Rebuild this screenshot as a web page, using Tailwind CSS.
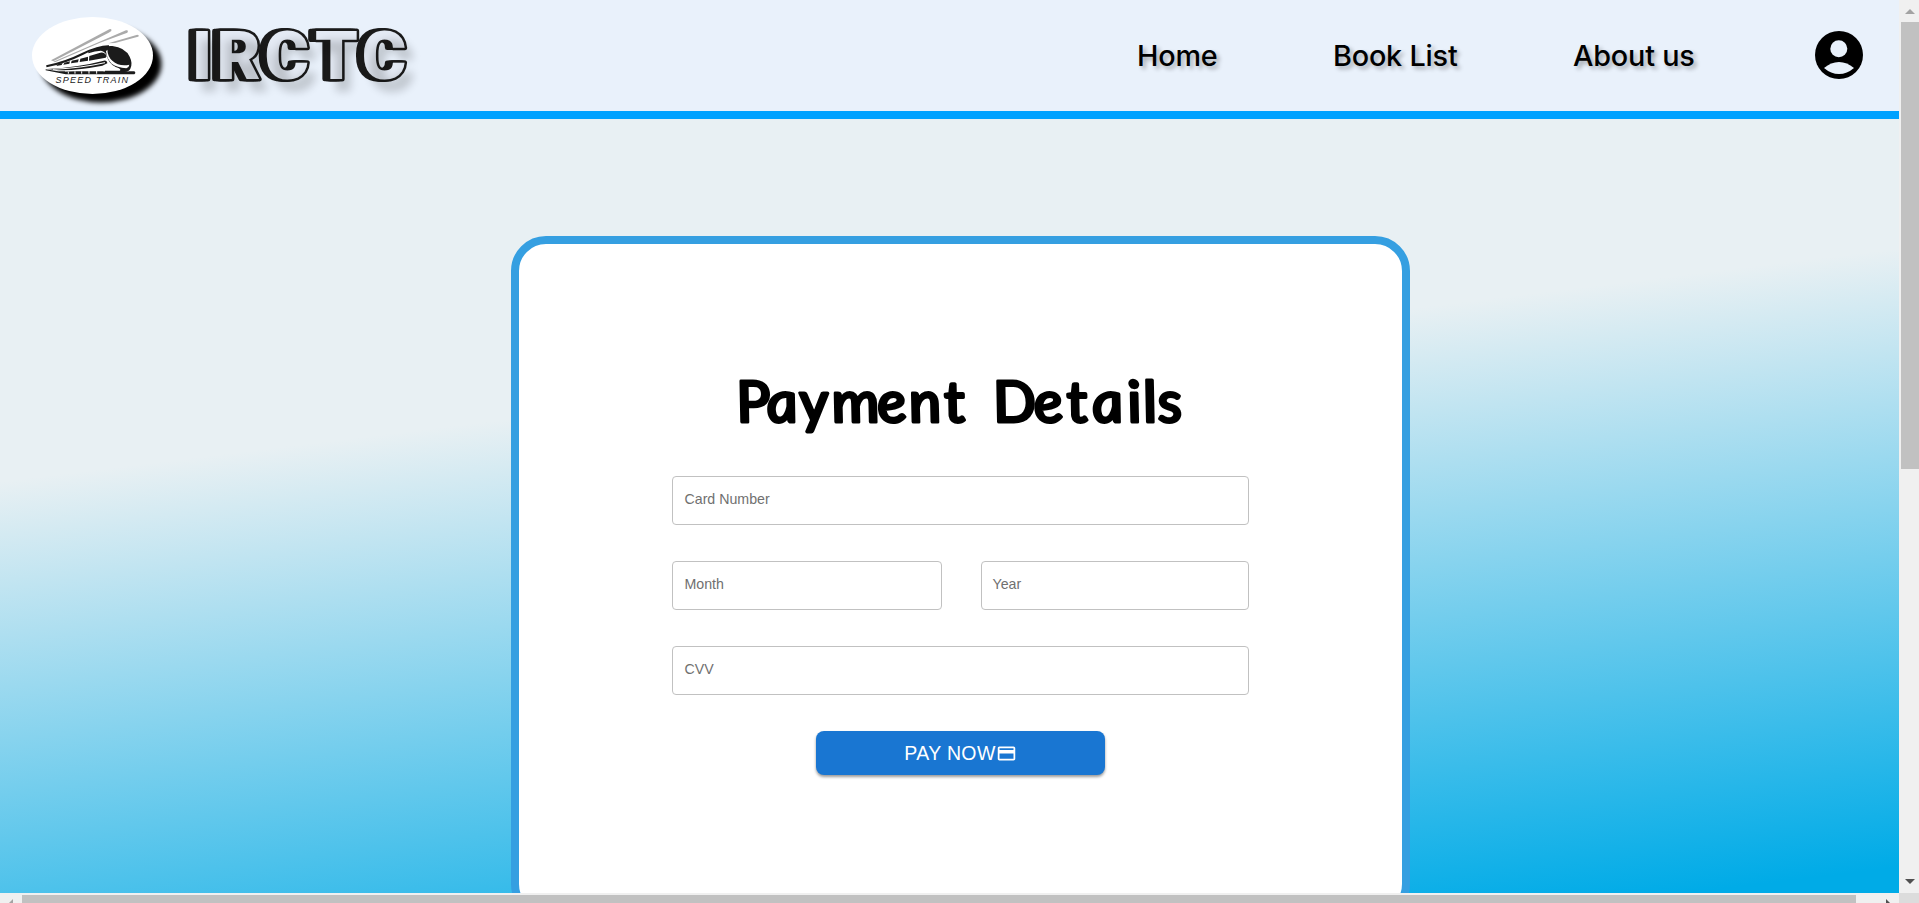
<!DOCTYPE html>
<html lang="en">
<head>
<meta charset="utf-8">
<title>Payment Details</title>
<script src="https://cdn.jsdelivr.net/npm/@tailwindcss/browser@4"></script>
</head>
<body class="h-[903px] w-[1919px] overflow-hidden bg-[#f0f0f0]">
<div class="grid h-[903px] grid-cols-[1899px_20px] grid-rows-[893px_10px] overflow-hidden">
  <div class="flex flex-col overflow-hidden bg-[linear-gradient(173deg,#e8f0f3_478px,#00abe7_1092px)]">
    <header class="flex h-[119px] shrink-0 border-b-8 border-[#00a2ff] bg-[#e9f1fb]">
      <svg class="h-[111px] w-[440px] shrink-0" viewBox="0 0 440 111">
        <defs>
          <filter id="b1" x="-20%" y="-20%" width="150%" height="150%"><feGaussianBlur stdDeviation="2.4"/></filter>
          <filter id="b2" x="-20%" y="-20%" width="150%" height="150%"><feGaussianBlur stdDeviation="4"/></filter>
        </defs>
        <ellipse cx="101" cy="64" rx="60.500" ry="38.500" filter="url(#b1)"/>
        <ellipse cx="92.500" cy="55.500" rx="60.500" ry="38.500" fill="#fff"/>
        <g transform="scale(.33333) translate(75 30)">
          <g fill="#aaa">
            <path d="M78 151L253 58q8-3 6 5L251 68 85 154z"/>
            <path d="M85 155L303 61q9-1 4 7L225 98 90 157z"/>
            <path d="M250 100L337 74q8 2 2 6L270 99z"/>
          </g>
          <path fill="#1b1b1b" d="M62 178L100 184H328q6 4 0 9H122L62 181z"/>
          <path fill="#fff" d="M240 108L262 160 312 184H235z"/>
          <path fill="none" stroke="#1b1b1b" stroke-width="6" d="M64 169Q120 158 172 132Q222 108 252 109"/>
          <path fill="#1b1b1b" d="M190 126Q230 106 262 108Q300 112 314 140Q324 160 316 176Q312 185 300 186H240V182H284Q292 178 272 171Q250 160 246 138Q242 126 228 122Q210 122 190 130z"/>
          <path fill="#fff" d="M247 119Q248 140 262 152Q282 170 313 164Q312 173 304 175Q276 172 260 161Q246 148 243 124z"/>
          <path fill="#1b1b1b" d="M193 138L226 128Q240 126 245 139L242 143 192 152zM166 146L189 140V152L164 156zM140 152L161 148 159 157 138 160zM118 158L135 154 133 161 115 164zM98 163L113 159 110 165 94 168z"/>
          <path fill="#1b1b1b" d="M66 177Q160 172 236 152Q246 150 247 160L232 167Q160 181 100 181z"/>
          <path fill="none" stroke="#fff" stroke-width="3" d="M84 178Q170 174 240 158"/>
          <path stroke="#fff" stroke-width="3" d="M130 185v6M150 184v7M170 184v7M192 183v8M215 183v8M120 183L225 178"/>
        </g>
        <text x="55.500" y="82.700" font-family="Liberation Sans" font-style="italic" font-size="9" fill="#222" textLength="72.500" lengthAdjust="spacing">SPEED TRAIN</text>
        <g font-family="Roboto" font-weight="900" font-size="66" stroke-linejoin="round" transform="translate(-8 0) scale(1.03 1)">
          <defs><text id="brand" x="194 218 264.500 313.500 359" y="79" paint-order="stroke">IRCTC</text></defs>
          <g fill="#1b1b1b" stroke="#1b1b1b" stroke-width="4.500">
            <use href="#brand" x="-5.500"/><use href="#brand" x="-3.500"/><use href="#brand" x="-2"/>
          </g>
          <use href="#brand" fill="#e4eaf4" stroke="#1b1b1b" stroke-width="5"/>
          <use href="#brand" x="7" y="11" fill="#000" stroke="#000" stroke-width="3" opacity=".17" filter="url(#b2)"/>
        </g>
      </svg>
      <nav class="ml-[697px] flex h-[111px] items-center pt-[2px] font-['Inter',sans-serif] text-[28.800px] leading-none font-medium tracking-[-0.200px] text-black [text-shadow:3px_3px_4px_rgba(0,0,0,0.3)]">
        <a class="w-[196px]">Home</a><a class="w-[240px]">Book List</a><a class="w-[242px]">About us</a>
      </nav>
      <svg class="mt-[31px] h-12 w-12 shrink-0" viewBox="0 0 48 48"><circle cx="24" cy="24" r="24"/><circle cx="23.800" cy="17.700" r="8.500" fill="#e9f1fb"/><path fill="#e9f1fb" d="M9 37Q16 31 24 31T39 37Q32 43 24 43T9 37z"/></svg>
    </header>
    <main class="mt-[117px] ml-[511px] flex h-[683px] w-[899px] shrink-0 flex-col items-center rounded-[35px] border-8 border-[#359fe1] bg-white pt-[112px]">
      <h1 class="h-[120px] w-[480px]">
        <svg class="h-[120px] w-[480px] overflow-visible" viewBox="0 0 480 120">
          <text transform="translate(12 66) scale(1.06 1) skewX(8)" y="0" x="5.700 34 65 95.500 138.500 168.500 202 215 248 286 317.500 341 374.500 389.500 403" font-family="'Comic Sans MS', Lato" font-style="italic" font-weight="400" font-size="57" stroke="#000" stroke-width="3.200" stroke-linejoin="round">Payment Details</text>
        </svg>
      </h1>
      <form class="flex w-[577px] flex-col items-center gap-9 font-['Liberation_Sans',sans-serif] text-[14.200px] text-[#707070]">
        <div class="flex h-[49px] w-full rounded border border-[#c1c1c1] px-[11.500px] pt-[14px] leading-[16px]">Card Number</div>
        <div class="flex w-full gap-[39px]">
          <div class="h-[49px] flex-1 rounded border border-[#c1c1c1] px-[11.500px] pt-[14px] leading-[16px]">Month</div>
          <div class="h-[49px] flex-1 rounded border border-[#c1c1c1] px-[11px] pt-[14px] leading-[16px]">Year</div>
        </div>
        <div class="flex h-[49px] w-full rounded border border-[#c1c1c1] px-[11.500px] pt-[14px] leading-[16px]">CVV</div>
        <button type="button" class="flex h-11 w-[289px] items-center justify-center rounded-lg bg-[#1976d2] text-[19.500px] tracking-[0.350px] text-white shadow-[0_2px_3px_rgba(0,0,0,0.4)]"><span class="pt-[2px]">PAY NOW</span><svg class="h-[21px] w-[21px]" viewBox="0 0 24 24" fill="currentColor"><path d="M20 4H4c-1.110 0-1.990.89-1.990 2L2 18c0 1.110.89 2 2 2h16c1.110 0 2-.89 2-2V6c0-1.110-.89-2-2-2zm0 14H4v-6h16v6zm0-10H4V6h16v2z"/></svg></button>
      </form>
    </main>
  </div>
  <div class="flex flex-col bg-[#f0f0f0]">
    <svg class="h-[22px] w-5" viewBox="0 0 20 22"><path fill="#a3a3a3" d="M6 14L11 9L16 14z"/></svg>
    <div class="ml-[2px] h-[447px] bg-[#c1c1c1]"></div>
    <svg class="mt-auto h-5 w-5" viewBox="0 0 20 20"><path fill="#505050" d="M6 6H16L11 11z"/></svg>
  </div>
  <div class="flex bg-[#f0f0f0]">
    <svg class="h-[10px] w-[22px]" viewBox="0 0 22 10"><path fill="#a3a3a3" d="M13 6V10H9z"/></svg>
    <div class="mt-[2px] h-2 w-[1834px] bg-[#c1c1c1]"></div>
    <svg class="h-[10px] w-[43px]" viewBox="0 0 43 10"><path fill="#505050" d="M30 6V10H34z"/></svg>
  </div>
  <div class="bg-[#dcdcdc]"></div>
</div>
</body>
</html>
